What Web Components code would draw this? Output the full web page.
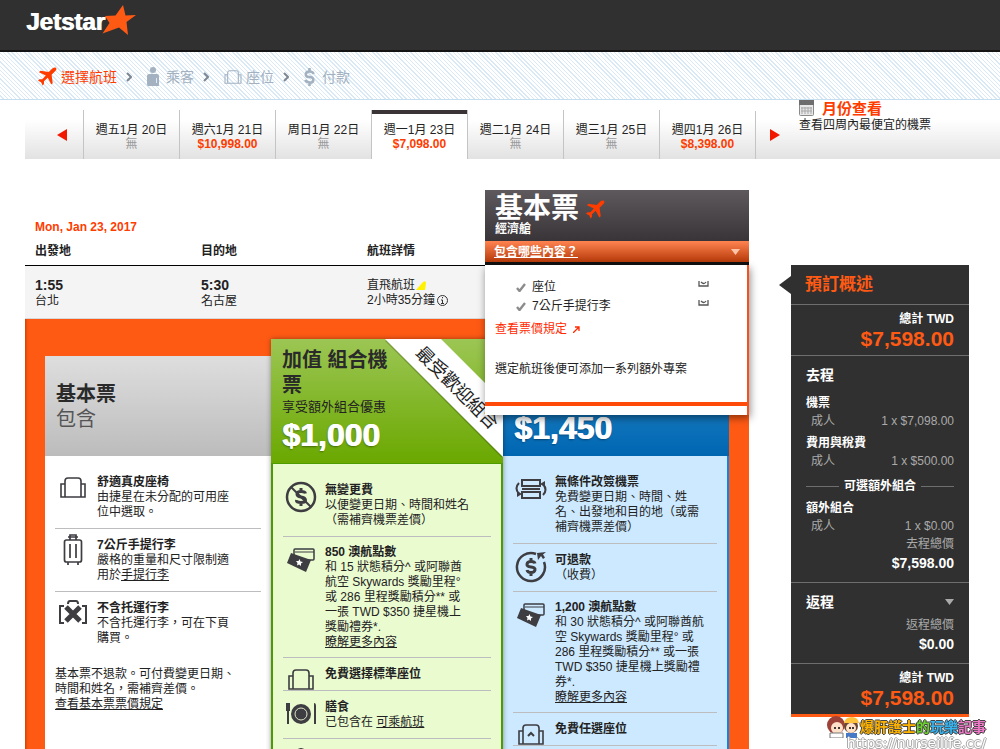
<!DOCTYPE html>
<html lang="zh-Hant">
<head>
<meta charset="utf-8">
<title>Jetstar 選擇航班</title>
<style>
  html { scrollbar-width: none; }
  body { margin: 0; min-height: 100vh; display: flex; flex-direction: column; background: #fff; color: #222;
    font: 12px/15px "Liberation Sans", "Noto Sans CJK TC", sans-serif; }
  a { color: inherit; }
  main { flex: 1; display: flex; gap: 42px; padding: 31px 31px 0 25px; }
  .results { flex: 1; display: flex; flex-direction: column; min-width: 0; }
  .flight { display: grid; grid-template-columns: 1fr 264px; }
  .bundles { flex: 1; display: grid; grid-template-columns: 1fr 232px 1fr; padding: 0 20px; background: #ff5a14; box-shadow: inset 3px 0 3px -2px #c43c00; }
</style>
</head>
<body>
<jet-header></jet-header>
<jet-steps>
  <jet-step icon="plane" current>選擇航班</jet-step>
  <jet-step icon="person">乘客</jet-step>
  <jet-step icon="seat">座位</jet-step>
  <jet-step icon="dollar">付款</jet-step>
</jet-steps>
<jet-dates>
  <jet-date>週五1月 20日</jet-date>
  <jet-date price="$10,998.00">週六1月 21日</jet-date>
  <jet-date>周日1月 22日</jet-date>
  <jet-date price="$7,098.00" current>週一1月 23日</jet-date>
  <jet-date>週二1月 24日</jet-date>
  <jet-date>週三1月 25日</jet-date>
  <jet-date price="$8,398.00">週四1月 26日</jet-date>
</jet-dates>
<main>
  <section class="results">
    <div class="flight">
      <jet-flight></jet-flight>
      <jet-fare></jet-fare>
    </div>
    <div class="bundles">
      <jet-bundle kind="basic">
        <span slot="title">基本票</span><span slot="sub">包含</span>
        <jet-item icon="seat"><span slot="title">舒適真皮座椅</span>由捷星在未分配的可用座<br>位中選取。</jet-item>
        <jet-item icon="case"><span slot="title">7公斤手提行李</span>嚴格的重量和尺寸限制適<br>用於<a href="#bag">手提行李</a></jet-item>
        <jet-item icon="nobag" last><span slot="title">不含托運行李</span>不含托運行李，可在下頁<br>購買。</jet-item>
        <jet-note>基本票不退款。可付費變更日期、<br>時間和姓名，需補齊差價。<br><a href="#rules">查看基本票票價規定</a></jet-note>
      </jet-bundle>
      <jet-bundle kind="plus" ribbon="最受歡迎組合">
        <span slot="title">加值 組合機<br>票</span><span slot="sub">享受額外組合優惠</span><span slot="price">$1,000</span>
        <jet-item icon="nofee"><span slot="title">無變更費</span>以便變更日期、時間和姓名<br>（需補齊機票差價）</jet-item>
        <jet-item icon="cards" dense><span slot="title">850 澳航點數</span>和 15 狀態積分^ 或阿聯酋<br>航空 Skywards 獎勵里程°<br>或 286 里程獎勵積分** 或<br>一張 TWD $350 捷星機上<br>獎勵禮券*.<br><a href="#more">瞭解更多內容</a></jet-item>
        <jet-item icon="seat"><span slot="title">免費選擇標準座位</span></jet-item>
        <jet-item icon="meal"><span slot="title">膳食</span>已包含在 <a href="#meal">可乘航班</a></jet-item>
        <jet-item icon="handle" last></jet-item>
      </jet-bundle>
      <jet-bundle kind="max">
        <span slot="price">$1,450</span>
        <jet-item icon="swap"><span slot="title">無條件改簽機票</span>免費變更日期、時間、姓<br>名、出發地和目的地（或需<br>補齊機票差價）</jet-item>
        <jet-item icon="refund"><span slot="title">可退款</span>（收費）</jet-item>
        <jet-item icon="cards" dense><span slot="title">1,200 澳航點數</span>和 30 狀態積分^ 或阿聯酋航<br>空 Skywards 獎勵里程° 或<br>286 里程獎勵積分** 或一張<br>TWD $350 捷星機上獎勵禮<br>券*.<br><a href="#more2">瞭解更多內容</a></jet-item>
        <jet-item icon="seatup"><span slot="title">免費任選座位</span></jet-item>
      </jet-bundle>
    </div>
  </section>
  <jet-summary></jet-summary>
</main>
<jet-watermark></jet-watermark>

<script>
const define = (name, css, html) => {
  const t = document.createElement('template');
  customElements.define(name, class extends HTMLElement {
    constructor() {
      super();
      t.innerHTML = `<style>*{box-sizing:border-box}${css}</style>` + (typeof html === 'function' ? html(this) : html);
      this.attachShadow({ mode: 'open' }).append(t.content.cloneNode(true));
    }
  });
};

/* icon set: [width, height, markup] */
const PLANE = '<path fill="currentColor" d="M19 1c1 1 0 2.500-1 3.500l-3.700 3.700 1.200 8.800-1.500 1.500-3.700-7.200-4 3.700v3L4.800 19.500 3.300 16 0 14.500 1.500 13h3l3.700-4L1 5.500 2.500 4l8.800 1.300 3.700-3.600c1.500-1.200 3-1.700 4-.7z"/>';
const SEAT = '<path fill="none" stroke="currentColor" stroke-width="1.6" d="M5 20V4q0-3 3-3h10q3 0 3 3v16M5 7H1v13h24V7h-4"/>';
const ICONS = {
  plane: [20, 20, PLANE],
  person: [12, 19, '<g fill="currentColor"><circle cx="6" cy="3" r="3"/><path d="M2 7h8q2 0 2 2v10H1q-1 0-1-2V9q0-2 2-2z"/></g><path d="M9.500 11v5" stroke="#dcebf6"/>'],
  seat: [26, 21, SEAT],
  seatup: [26, 21, SEAT + '<path fill="none" stroke="currentColor" stroke-width="2" d="M10 12l3-3 3 3"/>'],
  dollar: [11, 18, '<path fill="none" stroke="currentColor" stroke-width="2.600" d="M9.500 6Q9 3.500 5.500 3.500T1.800 6.300 5.500 9 9.300 12 5.500 14.500 1.500 11.800M5.500 0v4M5.500 14v4"/>'],
  case: [20, 32, '<g fill="none" stroke="currentColor" stroke-width="1.7"><path d="M7 6V1h6v5M5 3h10"/><rect x="1.500" y="6" width="17" height="22" rx="2"/><path d="M7 10v14M13 10v14M5 28v3M15 28v3"/></g>'],
  nobag: [28, 25, '<g fill="none" stroke="currentColor" stroke-width="2"><path d="M9 4q0-3 2-3h6q2 0 2 3M5 6H1v17h4M23 6h4v17h-4"/><path stroke-width="5" d="M7 7l14 14M21 7L7 21"/></g>'],
  nofee: [32, 32, '<g fill="none" stroke="currentColor"><circle cx="16" cy="16" r="14" stroke-width="2.500"/><path stroke-width="3" d="M20.500 12.500Q20 10.500 16 10.500T12 13 16 16 20.500 19 16 21.500 11.500 19M16 7v4M16 21v4"/><path stroke-width="2" d="M6 6l20 20"/></g>'],
  refund: [32, 32, '<g fill="none" stroke="currentColor"><path stroke-width="2.500" d="M21 3A14 14 0 1 0 29 11"/><path stroke-width="3" d="M20 12.500Q19.500 10.500 16 10.500T12 13 16 16 20 19 16 21.500 12 19M16 7v4M16 21v4"/></g><path fill="currentColor" d="M22 2l9-1-3 2.500 2 3-2 1.500-2-3-3 4z"/>'],
  cards: [28, 24, '<rect x="7" y="1" width="20" height="11" rx="1" fill="none" stroke="currentColor" stroke-width="1.500"/><path d="M8 4h19" stroke="currentColor"/><path fill="currentColor" d="M4 5l20 7-5 12L0 15z"/><path fill="#fff" d="M12.500 11l1 2.500 2.500.5-2 1.500v2.500l-2-1.500-2 1 .5-2.500-1.500-2h2.500z"/>'],
  meal: [32, 22, '<g fill="currentColor"><circle cx="16" cy="11" r="10"/><path d="M1 0h4v8H4v13H2V8H1zM29 0q2 0 2 3v18h-2z"/></g><circle cx="16" cy="11" r="6" fill="none" stroke="#dfe8c8" stroke-width="1"/>'],
  swap: [32, 22, '<g fill="none" stroke="currentColor" stroke-width="2"><path d="M7 2h18v6H7zM7 14h18v6H7zM7 11h18" /><path d="M4 5Q-1 10 4 16M28 17q5-5 0-11"/></g><path fill="currentColor" d="M2 13l5 3-5 3zM30 9l-5-3 5-3z"/>'],
  handle: [26, 8, '<path fill="none" stroke="currentColor" stroke-width="2" d="M8 8q0-5 5-6 5 1 5 6"/>'],
  check: [10, 9, '<path fill="none" stroke="#8c8c8c" stroke-width="2.400" d="M1 5l2.500 3L9 1"/>'],
  seatcut: [11, 6, '<path fill="none" stroke="#555" stroke-width="1.300" d="M1 0v5h9V0M3 1q3 3 5 0"/>'],
  calendar: [15, 16, '<rect x=".5" y=".5" width="14" height="15" rx="1" fill="#e8e8e8" stroke="#8a8a8a"/><path fill="#6d6d6d" d="M0 0h15v5H0z"/><path d="M3 7v7M6 7v7M9 7v7M12 7v7M2 8h11M2 11h11" stroke="#a8a8a8"/>'],
  ext: [7, 7, '<path fill="none" stroke="currentColor" stroke-width="1.300" d="M0 7l6-6M2 1h4v4"/>']
};
customElements.define('jet-icon', class extends HTMLElement {
  static observedAttributes = ['name'];
  constructor() { super(); this.attachShadow({ mode: 'open' }); }
  attributeChangedCallback(_, __, name) {
    const [w, h, body] = ICONS[name];
    this.shadowRoot.innerHTML = `<style>:host{display:inline-block;flex:none;line-height:0}svg{display:block;width:var(--w,${w}px);height:var(--h,${h}px)}</style><svg viewBox="0 0 ${w} ${h}" aria-hidden="true">${body}</svg>`;
  }
});

define('jet-header', `
  :host{display:block;background:#303030;border-bottom:2px solid #141414}
  a{display:flex;align-items:flex-start;height:50px;padding:5px 26px;color:#fff;text-decoration:none;font:bold 24px/34px "Liberation Sans",sans-serif;text-shadow:1px 0 #fff}
  svg{width:34px;height:32px;margin-left:-3px}`,
  `<a href="#home">Jetstar<svg viewBox="0 0 34 32" aria-hidden="true"><path fill="#ff5a14" d="M21 0l2.500 10.500L34 10l-9.500 7L26 30l-9-7.500L.5 28.500 7.500 18 3 11l10.500-.5z"/></svg></a>`);

define('jet-steps', `
  :host{display:flex;align-items:center;height:48px;box-sizing:border-box;padding:2px 38px 0;border-bottom:1px solid #c5def0;
    background:repeating-linear-gradient(45deg,#fff 0 2px,#d9e9f6 2px 3px)}`, `<slot></slot>`);

define('jet-step', `
  :host{display:flex;align-items:center;color:#a3b1c0;font-size:14px;line-height:20px}
  :host([current]){color:#ff3c00}
  :host([icon=plane]) jet-icon{--w:19px;--h:19px}
  :host([icon=seat]) jet-icon{--w:18px;--h:14px;margin-right:4px}
  jet-icon{margin-right:4px}
  :host([icon=person]) jet-icon,:host([icon=dollar]) jet-icon{margin-right:7px}
  svg{width:6px;height:10px;margin:0 15px 0 9px}
  :host(:last-child) svg{display:none}`,
  el => `<jet-icon name="${el.getAttribute('icon')}"></jet-icon><slot></slot><svg viewBox="0 0 6 10" aria-hidden="true"><path d="M1 1l4 4-4 4" fill="none" stroke="#7d8894" stroke-width="2"/></svg>`);

define('jet-dates', `
  :host{display:flex;align-items:flex-end;height:59px;margin-left:25px;background:linear-gradient(#fff 20px,#e2e2e2)}
  button{border:0;background:none;padding:0;height:48px;width:58px;display:flex;align-items:center;justify-content:flex-end}
  .prev{padding-right:16px}
  .next{width:44px;justify-content:flex-start;padding-left:14px;border-left:1px solid #c4c4c4}
  svg{width:10px;height:12px}
  .month{align-self:flex-start;display:grid;grid-template-columns:auto 1fr;column-gap:8px}
  .month a{color:#ff3c00;font-size:15px;line-height:18px;text-decoration:none;font-weight:bold}
  .month p{grid-column:1/3;margin:0;line-height:15px}`,
  `<button class="prev" aria-label="上一週"><svg viewBox="0 0 10 12"><path fill="#f21800" d="M10 0v12L0 6z"/></svg></button><slot></slot>
   <button class="next" aria-label="下一週"><svg viewBox="0 0 10 12"><path fill="#f21800" d="M0 0v12l10-6z"/></svg></button>
   <div class="month"><jet-icon name="calendar"></jet-icon><a href="#month">月份查看</a><p>查看四周內最便宜的機票</p></div>`);

define('jet-date', `
  :host{flex:none;width:96px;height:49px;box-sizing:border-box;border-left:1px solid #c4c4c4}
  a{display:flex;flex-direction:column;align-items:center;height:100%;padding-top:13px;color:#222;text-decoration:none;line-height:14px}
  span{color:#999} b{color:#ff3c00}
  :host([current]){background:#fff}
  :host([current]) a{border-top:4px solid #3a3436;padding-top:9px}`,
  el => `<a href="#date"><slot></slot>${el.hasAttribute('price') ? `<b>${el.getAttribute('price')}</b>` : '<span>無</span>'}</a>`);

define('jet-flight', `
  :host{display:block;padding-top:28px}
  h2{margin:0 0 0 10px;color:#ff3c00;font-size:12px;line-height:18px}
  table{width:100%;border-collapse:separate;border-spacing:0;table-layout:fixed}
  th{height:30px;padding:2px 0 0 10px;text-align:left;font-weight:bold;color:#222;border-bottom:1px solid #000}
  td{height:53px;padding:2px 0 0 10px;background:#f4f4f4;border-bottom:1px solid #d8d8d8;white-space:nowrap}
  th:last-child{width:128px}
  b{font-size:14px}
  svg{width:12px;height:10px;vertical-align:-1px}
  .info{width:11px;height:11px;margin-left:2px;vertical-align:-2px}`,
  `<h2>Mon, Jan 23, 2017</h2>
   <table><thead><tr><th>出發地</th><th>目的地</th><th>航班詳情</th></tr></thead>
   <tbody><tr><td><b>1:55</b><br>台北</td><td><b>5:30</b><br>名古屋</td>
   <td>直飛航班<svg viewBox="0 0 12 10"><path fill="#fff200" d="M1 10l7-8q3-2 3 1l-1 7z"/></svg><br>2小時35分鐘<svg class="info" viewBox="0 0 11 11"><g fill="none" stroke="#333"><circle cx="5.500" cy="5.500" r="5"/><path d="M5.500 2v1.300M4 5h1.500v3.500M4 8.500h3"/></g></svg></td></tr></tbody></table>`);

define('jet-fare', `
  :host{display:block;position:relative;z-index:2}
  header{height:51px;padding:4px 10px 0;background:linear-gradient(#5d595c,#393437);color:#fff}
  h3{margin:0;display:flex;align-items:center;gap:7px;font-size:28px;line-height:30px}
  h3 jet-icon{color:#ff3c00;--w:19px;--h:19px}
  header b{display:block;line-height:10px}
  button{display:flex;justify-content:space-between;align-items:center;width:100%;height:24px;padding:0 9px;border:0;border-bottom:3px solid #111;
    background:linear-gradient(#ff8450,#b63a0a);color:#fff;font:bold 12px/18px "Liberation Sans","Noto Sans CJK TC",sans-serif;text-decoration:underline}
  button svg{width:9px;height:6px}
  .panel{position:absolute;top:75px;left:0;right:0;padding:13px 0 9px;background:#fff;border-right:2px solid #f4511e;box-shadow:1px 3px 8px #0007;line-height:19px}
  ul{margin:0;padding:0 38px 0 31px;list-style:none}
  li{display:flex;align-items:center;gap:6px}
  li span{flex:1}
  li jet-icon:last-child{margin-bottom:8px}
  a{display:flex;align-items:center;gap:6px;margin:4px 10px 0;color:#ff2a00;text-decoration:none}
  p{margin:21px 10px 23px;padding:0}
  hr{margin:0;border:0;height:4px;background:#ff4a08}`,
  `<header><h3>基本票<jet-icon name="plane"></jet-icon></h3><b>經濟艙</b></header>
   <button>包含哪些內容？<svg viewBox="0 0 9 6"><path fill="#ffc4a8" d="M0 0h9L4.500 6z"/></svg></button>
   <div class="panel"><ul><li><jet-icon name="check"></jet-icon><span>座位</span><jet-icon name="seatcut"></jet-icon></li>
   <li><jet-icon name="check"></jet-icon><span>7公斤手提行李</span><jet-icon name="seatcut"></jet-icon></li></ul>
   <a href="#fare">查看票價規定<jet-icon name="ext"></jet-icon></a><p>選定航班後便可添加一系列額外專案</p><hr></div>`);

define('jet-bundle', `
  :host{display:flex;flex-direction:column;margin-top:37px;background:#fff;min-width:0}
  header{position:relative;min-height:100px;display:flex;flex-direction:column;justify-content:flex-end;padding:9px 11px 11px;background:linear-gradient(#dedede,#bcbcbc)}
  h3{margin:0;font-size:20px;line-height:25px;font-weight:bold;color:#2a2a2a}
  .sub{line-height:18px;font-size:13px}
  .price{color:#fff;font-size:32px;line-height:34px;font-weight:bold;margin-top:2px;text-shadow:1px 0 #fff,0 1px 2px #0006}
  .body{flex:1;padding:10px 10px 0}
  :host([kind=basic]) header{padding-top:13px;justify-content:center}
  :host([kind=basic]) .sub{font-size:20px;line-height:25px;color:#555}
  :host([kind=basic]) .price,:host([kind=max]) h3,:host([kind=max]) .sub{display:none}
  :host([kind=plus]){margin-top:20px;background:#ebfbd0;box-shadow:0 0 5px #0006;z-index:1}
  :host([kind=plus]) header{background:linear-gradient(#9cc654,#6aa800)}
  :host([kind=plus]) .body{border:2px solid #4e9b00;border-width:1px 2px 0}
  :host([kind=max]){background:#cce9ff;border-right:2px solid #0a84f0}
  :host([kind=max]) header{background:linear-gradient(#2d8ccb,#0066b2);margin-right:-2px}
  .ribbon{position:absolute;top:0;right:0;width:118px;height:118px;color:#222}
  .ribbon svg{display:block;width:118px;height:118px}
  .ribbon span{position:absolute;top:37px;left:17px;width:110px;text-align:center;font-size:18px;line-height:24px;transform:rotate(45deg)}`,
  el => `<header><h3><slot name="title"></slot></h3><div class="sub"><slot name="sub"></slot></div><div class="price"><slot name="price"></slot></div>
   ${el.hasAttribute('ribbon') ? `<div class="ribbon"><svg viewBox="0 0 118 118" aria-hidden="true"><path fill="#0003" d="M0 2l118 118v-5L3 0z"/><path fill="#fff" d="M0 0h56l62 62v56z"/></svg><span>${el.getAttribute('ribbon')}</span></div>` : ''}</header><div class="body"><slot></slot></div>`);

define('jet-item', `
  :host{display:flex;gap:6px;padding:8px 0;border-bottom:1px solid #bdbdc0}
  :host([dense]){padding:7px 0}
  :host([last]){border-bottom:0}
  .icon{width:36px;height:16px;display:flex;justify-content:center;color:#3d3d42}
  :host([icon=seat]) jet-icon,:host([icon=seatup]) jet-icon{margin-top:3px}
  :host([icon=cards]) jet-icon,:host([icon=meal]) jet-icon,:host([icon=swap]) jet-icon{margin-top:4px}
  :host([icon=case]) jet-icon{margin-top:-3px}
  :host([icon=refund]) jet-icon,:host([icon=nofee]) jet-icon{margin-top:-1px}
  h4{margin:0;font-size:12px;line-height:16px;font-weight:bold}
  .text{white-space:nowrap}`,
  el => `<div class="icon"><jet-icon name="${el.getAttribute('icon')}"></jet-icon></div><div class="text"><h4><slot name="title"></slot></h4><slot></slot></div>`);

define('jet-note', `:host{display:block;padding-top:13px;white-space:nowrap}`, `<slot></slot>`);

define('jet-summary', `
  :host{display:block;position:relative;flex:none;align-self:flex-start;width:178px;margin-top:75px;background:#303030;border-bottom:3px solid #ff5a14;color:#aaa;line-height:18px}
  .arrow{position:absolute;left:-12px;top:11px;width:12px;height:18px}
  section{padding:5px 15px 6px;border-top:1px solid #6e6e6e}
  h2{margin:0;padding:0 14px;font-size:17px;line-height:39px;color:#ff5a14}
  h3{margin:0;font-size:14px;line-height:18px;color:#fff;display:flex;justify-content:space-between;align-items:center}
  h3 svg{width:9px;height:6px}
  h4{margin:4px 0 0;font-size:12px;line-height:18px;color:#fff}
  .total{text-align:right;color:#fff;font-weight:bold}
  .total strong{display:block;font-size:21px;line-height:21px;color:#ff5a14}
  .trip{padding:10px 15px 9px}
  .row{display:flex;justify-content:space-between;padding-left:5px}
  h4.first{margin-top:10px}
  .line{display:flex;align-items:center;gap:5px;color:#fff;font-weight:bold;margin:7px 0 0}
  .line::before,.line::after{content:"";flex:1;height:1px;background:#6e6e6e}
  .sum{text-align:right}
  .sum b{display:block;color:#fff;font-size:14px;line-height:20px}
  .back{margin-top:5px}`,
  `<svg class="arrow" viewBox="0 0 12 18" aria-hidden="true"><path fill="#303030" d="M12 0v18L0 9z"/></svg>
   <h2>預訂概述</h2>
   <section class="total">總計 TWD<strong>$7,598.00</strong></section>
   <section class="trip"><h3>去程</h3>
     <h4 class="first">機票</h4><div class="row"><span>成人</span><span>1 x $7,098.00</span></div>
     <h4>費用與稅費</h4><div class="row"><span>成人</span><span>1 x $500.00</span></div>
     <div class="line">可選額外組合</div>
     <h4>額外組合</h4><div class="row"><span>成人</span><span>1 x $0.00</span></div>
     <div class="sum">去程總價<b>$7,598.00</b></div></section>
   <section class="trip"><h3>返程<svg viewBox="0 0 9 6"><path fill="#aaa" d="M0 0h9L4.500 6z"/></svg></h3>
     <div class="sum back">返程總價<b>$0.00</b></div></section>
   <section class="total">總計 TWD<strong>$7,598.00</strong></section>`);

define('jet-watermark', `
  :host{position:fixed;right:14px;bottom:-2px;width:160px;z-index:5}
  .name{display:flex;align-items:center;justify-content:flex-end;font-size:14px;line-height:16px;font-weight:bold;color:#ffb400;text-shadow:1px 0 #444,-1px 0 #444,0 1px #444,0 -1px #444}
  svg{width:34px;height:22px;margin:-3px 0}
  i{font-style:normal}
  .url{font:14px/16px "DejaVu Sans",sans-serif;text-align:right;color:#fff;text-shadow:1px 0 #aaa,-1px 0 #aaa,0 1px #aaa,0 -1px #aaa}`,
  `<div class="name"><svg viewBox="0 0 34 22" aria-hidden="true"><circle cx="10" cy="9" r="9" fill="#9c4238"/><circle cx="11" cy="12" r="6" fill="#ffe0c8"/><path fill="#fff" stroke="#777" d="M4 17h13v5H4z"/><circle cx="25" cy="10" r="7" fill="#6b4632"/><circle cx="25" cy="12" r="5" fill="#ffe0c8"/><path fill="#ffc23c" d="M18 7q1-6 8-6 6 0 7 6z"/><path fill="#4678c8" d="M20 17h11v5H20z"/><circle cx="9" cy="12" r="1"/><circle cx="13" cy="12" r="1"/><circle cx="24" cy="12" r="1"/><circle cx="27" cy="12" r="1"/></svg>
   <span>爆肝護士<i style="color:#6cd12c">的</i><i style="color:#35b5f2">玩樂</i><i style="color:#ef79c8">記事</i></span></div><div class="url">https://nurseilife.cc/</div>`);
</script>
</body>
</html>
